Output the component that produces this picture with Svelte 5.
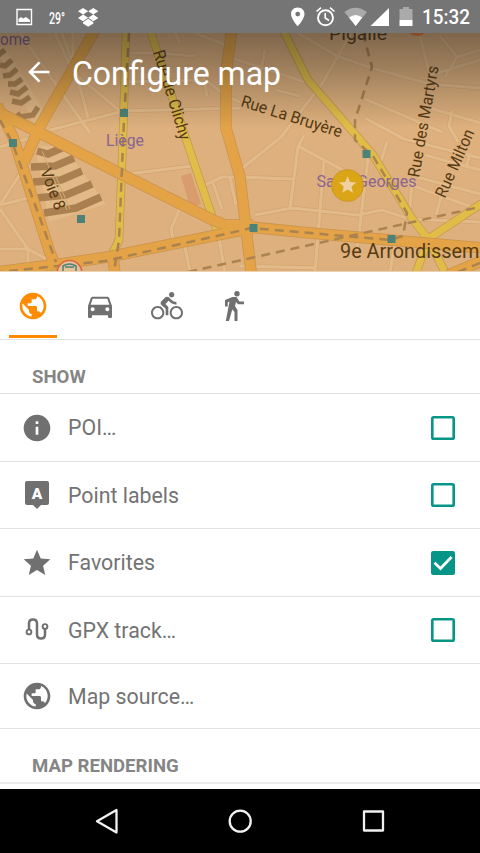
<script>
  const globe = 'M12 2C6.48 2 2 6.48 2 12s4.48 10 10 10 10-4.48 10-10S17.52 2 12 2zm-1 17.93c-3.95-.49-7-3.85-7-7.93 0-.62.08-1.21.21-1.79L9 15v1c0 1.1.9 2 2 2v1.93zm6.9-2.54c-.26-.81-1-1.39-1.9-1.39h-1v-3c0-.55-.45-1-1-1H8v-2h2c.55 0 1-.45 1-1V7h2c1.1 0 2-.9 2-2v-.41c2.93 1.19 5 4.06 5 7.41 0 2.08-.8 3.97-2.1 5.39z';
  const car = 'M18.92 6.01C18.72 5.42 18.16 5 17.5 5h-11c-.66 0-1.21.42-1.42 1.01L3 12v8c0 .55.45 1 1 1h1c.55 0 1-.45 1-1v-1h12v1c0 .55.45 1 1 1h1c.55 0 1-.45 1-1v-8l-2.08-5.99zM6.5 16c-.83 0-1.5-.67-1.5-1.5S5.67 13 6.5 13s1.5.67 1.5 1.5S7.33 16 6.5 16zm11 0c-.83 0-1.5-.67-1.5-1.5s.67-1.5 1.5-1.5 1.5.67 1.5 1.5-.67 1.5-1.5 1.5zM5 11l1.5-4.5h11L19 11H5z';
  const info = 'M12 2C6.48 2 2 6.48 2 12s4.48 10 10 10 10-4.48 10-10S17.52 2 12 2zm1 15h-2v-6h2v6zm0-8h-2V7h2v2z';
  const star = 'M12 17.27L18.18 21l-1.64-7.03L22 9.24l-7.19-.61L12 2 9.19 8.63 2 9.24l5.46 4.73L5.82 21z';
  const rows = [
    { label: 'POI…', icon: 'info', h: 68, box: true, on: false },
    { label: 'Point labels', icon: 'label', h: 67, box: true, on: false },
    { label: 'Favorites', icon: 'star', h: 68, box: true, on: true },
    { label: 'GPX track…', icon: 'track', h: 67, box: true, on: false },
    { label: 'Map source…', icon: 'globe', h: 65, box: false, on: false }
  ];
  const minor = [
    'M20 33L90 133', 'M55 33L73 72L120 111L240 108', 'M73 33V72', 'M62 33L77 75L88 118', 'M50 130L120 112', 'M125 53H158L195 56', 'M128 82L206 80L226 96L240 102', 'M203 75L207 96', 'M180 43L175 33', 'M195 33L228 46', 'M0 147L30 138', 'M0 205L26 165', 'M0 205L28 198', 'M0 209L28 249L52 262', 'M0 249H28V272', 'M128 174L192 166', 'M180 208L171 229L173 239', 'M205 185L222 177L240 177', 'M213 183L222 209', 'M230 178L236 205', 'M185 247L190 272', 'M219 239L225 272',
    'M232 58L308 83', 'M298 33L337 56L372 68L430 84L480 88', 'M350 35L322 84L281 137L240 170', 'M265 50L260 75', 'M276 90L300 96', 'M240 177L293 179', 'M304 135L298 147L290 208', 'M298 146L365 182', 'M324 161L315 272', 'M368 158L357 250', 'M365 118L404 139L480 158', 'M365 99L442 132', 'M387 142L380 164', 'M420 37L430 75L480 60', 'M440 36L457 57L480 50', 'M457 57L445 77', 'M430 108L480 123', 'M452 111L449 126L458 142', 'M408 184L480 210', 'M412 180L409 218', 'M425 155L480 170', 'M417 177L480 194', 'M443 190L436 215', 'M470 153L466 168', 'M255 215L292 208L320 211L358 215L382 210L410 219L480 222', 'M240 266L316 268', 'M395 243L390 272'
  ];
  const orange = ['M95 30L40 126L24 162', 'M-3 105L13 137L30 190L49 250L56 268', 'M0 113L38 132L123 175L213 220L225 225L253 225', 'M-4 272L60 264L108 257L252 228', 'M232 30L226 72V128L240 177L252 280', 'M250 227L310 233L390 240L484 248', 'M113 256L115 274', 'M448 275L484 260'];
  const yellow = ['M126 30L123 135L119 240L112 254', 'M150 30L186 139L217 231', 'M283 30L308 80L355 134L373 155L411 217L428 239L447 276', 'M484 202L428 239L415 276'];
  const dashes = ['M129 33L124 120L119 240L114 272', 'M363 33L372 67L355 120L355 140L373 156L407 213L403 236L390 240L252 228L105 261L0 272', 'M0 120L12 142L56 262', 'M188 272L480 207', 'M458 272L480 263'];
  const stations = [[124, 113], [13, 143], [81, 219], [253.5, 228], [366.5, 154], [391.5, 239]];
</script>

<div class="screen">
  <header>
    <svg class="map" viewBox="0 0 480 272" width="480" height="272" fill="none">
      <defs><linearGradient id="shade" x2="0" y2="1"><stop offset="0.1" stop-color="#151515" stop-opacity=".5"/><stop offset=".24" stop-color="#151515" stop-opacity=".33"/><stop offset=".47" stop-color="#151515" stop-opacity="0"/></linearGradient></defs>
      <rect width="480" height="272" fill="#deb07d"/>
      <path d="M181 176L191 173L201 204L190 207Z" fill="#d99c6d"/>
      <g stroke="#d2a571" stroke-width="4.4" stroke-linejoin="round">{#each minor as d}<path {d}/>{/each}</g>
      <g stroke="#e3ba89" stroke-width="3.2" stroke-linejoin="round">{#each minor as d}<path {d}/>{/each}</g>
      <g>
        <path d="M-4 50L14 82L34 125L48 122L40 104L12 58L-4 38Z" fill="#e0b885"/>
        <g stroke="#aa8050" stroke-width="5.5"><path d="M-3 56L5 50"/><path d="M0 65L5 66L12 60"/><path d="M3 76L10 75L17 69"/><path d="M8 84L15 84L22 79"/><path d="M10 92L18 94L27 87"/><path d="M12 101L21 103L30 97"/><path d="M17 113L20 117L33 115L38 107"/></g>
        <path d="M35 147L63 145L106 204L49 222Z" fill="#e2ba87"/>
        <g stroke="#aa8050" stroke-width="7.5"><path d="M37 151L48 154L62 148"/><path d="M31 167L55 166L74 158"/><path d="M33 182L61 180L82 171"/><path d="M37 198L66 195L92 184"/><path d="M44 213L76 208L101 197"/></g>
        <path d="M42 151L67 210M56 177L70 209" stroke="#d5aa73" stroke-width="1"/>
      </g>
      <g stroke="#c39756" stroke-width="8.5" stroke-linejoin="round">{#each yellow as d}<path {d}/>{/each}</g>
      <g stroke="#e1bd48" stroke-width="7" stroke-linejoin="round">{#each yellow as d}<path {d}/>{/each}</g>
      <g stroke="#ca934d" stroke-width="11.5" stroke-linejoin="round">{#each orange as d}<path {d}/>{/each}</g>
      <g stroke="#e3a346" stroke-width="10" stroke-linejoin="round">{#each orange as d}<path {d}/>{/each}</g>
      <g stroke="#aa8350" stroke-width="2.5" stroke-dasharray="9 6">{#each dashes as d}<path {d}/>{/each}</g>
      {#each stations as [x, y]}<rect x={x - 4} y={y - 4} width="8" height="8" fill="#4d8278"/>{/each}
      <circle cx="417" cy="24" r="12" fill="#eb7e37"/>
      <circle cx="69.5" cy="273" r="12.5" fill="#e6c29a" stroke="#dc663f" stroke-width="1.5"/>
      <path d="M63 272V266Q69.5 262 76 266V272M65 267H74" stroke="#4e8177" stroke-width="1.5"/>
      <g font-size="16.5" fill="#563b13">
        <text x="0" y="45" font-size="16" fill="#805b87" textLength="30" lengthAdjust="spacingAndGlyphs">ome</text>
        <text x="106" y="146" font-size="16.5" fill="#896591" textLength="38" lengthAdjust="spacingAndGlyphs">Liège</text>
        <text x="329" y="40" font-size="19" textLength="58" lengthAdjust="spacingAndGlyphs">Pigalle</text>
        <text x="316.5" y="187" fill="#896591" textLength="100" lengthAdjust="spacingAndGlyphs">Saint-Georges</text>
        <text transform="translate(153 52) rotate(73)" textLength="93" lengthAdjust="spacingAndGlyphs">Rue de Clichy</text>
        <text transform="translate(240 106) rotate(17.5)" textLength="105" lengthAdjust="spacingAndGlyphs">Rue La Bruyère</text>
        <text transform="translate(419 178) rotate(-80)" textLength="113" lengthAdjust="spacingAndGlyphs">Rue des Martyrs</text>
        <text transform="translate(445 199) rotate(-66)" textLength="73" lengthAdjust="spacingAndGlyphs">Rue Milton</text>
        <text transform="translate(40 171) rotate(69)" textLength="43" lengthAdjust="spacingAndGlyphs">Voie 8</text>
        <text x="340" y="258" font-size="19.5" textLength="139.5" lengthAdjust="spacingAndGlyphs">9e Arrondissem</text>
      </g>
      <circle cx="347.5" cy="185.5" r="16" fill="#daa516" stroke="#c28e23" stroke-width=".6"/>
      <path transform="translate(337.3 174.6) scale(.86)" d={star} fill="#efd0a1"/>
      <rect width="480" height="272" fill="url(#shade)"/>
      <path d="M0 271.5H480" stroke="#ecd2ae"/>
    </svg>
    <div class="status">
      <svg width="480" height="33" viewBox="0 0 480 33" fill="#fff">
        <path d="M17 9.5H31.5V24.5H17Z" fill="none" stroke="#fff" stroke-width="1.4"/><path d="M18.5 22V19L21 17L23 18.5L26 17L30 20V22Z"/>
        <path d="M83 8L88.2 11.3L83.1 14.5L78 11.3ZM93.4 8L98.3 11.3L93.3 14.5L88.2 11.3ZM83.1 14.5L88.2 17.8L83 21.2L78 17.9ZM93.3 14.5L98.3 17.9L93.4 21.2L88.2 17.8ZM83 22.2L88.2 18.8L93.4 22.2V23.5L88.2 26.7L83 23.5Z"/>
        <path fill-rule="evenodd" d="M297.7 7.5C293.7 7.5 291 10.4 291 14C291 19 297.7 26.2 297.7 26.2S304.5 19 304.5 14C304.5 10.4 301.7 7.5 297.7 7.5ZM297.7 11.7A2.4 2.4 0 1 1 297.7 16.5A2.4 2.4 0 1 1 297.7 11.7Z"/>
        <g fill="none" stroke="#fff" stroke-width="1.9"><circle cx="325.5" cy="17.8" r="7.5"/><path d="M325.2 13V18L329 20.5M316.5 11.5L321 7.7M330 7.7L334.5 11.5" stroke-width="1.6"/></g>
        <path d="M344.3 12Q355.5 3.5 367 12L355.7 26Z" fill="#aaa"/><path d="M349 17.5Q355.6 12.5 362.2 17.5L355.7 26Z"/>
        <path d="M389 8V26H370.5Z"/><path d="M403 7H409V9H412.5V20H399.5V9H403Z" fill="#aaa"/><path d="M399.5 20H412.5V26H399.5Z"/>
      </svg>
      <span class="temp">29°</span><span class="clock">15:32</span>
    </div>
    <div class="title">
      <svg width="24" height="24" viewBox="0 0 24 24"><path d="M22.5 12H3M12.5 2.3L3 12L12.5 21.7" fill="none" stroke="#fff" stroke-width="2.6"/></svg>
      <h1>Configure map</h1>
    </div>
  </header>

  <nav class="tabs">
    <button class="active" aria-label="Browse"><svg viewBox="0 0 24 24" width="32" height="32"><path d={globe}/></svg></button>
    <button aria-label="Car"><svg viewBox="0 0 24 24" width="32" height="32"><path d={car}/></svg></button>
    <button aria-label="Bicycle"><svg viewBox="0 0 24 24" width="32" height="32"><path d="M15.5 5.5c1.1 0 2-.9 2-2s-.9-2-2-2-2 .9-2 2 .9 2 2 2zM5 12c-2.8 0-5 2.200-5 5s2.200 5 5 5 5-2.200 5-5-2.200-5-5-5zm0 8.500c-1.900 0-3.500-1.600-3.500-3.500s1.600-3.500 3.500-3.500 3.500 1.600 3.500 3.500-1.600 3.500-3.500 3.500zm5.800-10l2.400-2.400.8.8c1.300 1.300 3 2.100 5.100 2.100V9c-1.500 0-2.700-.6-3.600-1.500l-1.900-1.900c-.5-.4-1-.6-1.600-.6s-1.100.2-1.400.6L7.800 8.400c-.4.4-.6.9-.6 1.400 0 .6.2 1.100.6 1.400L11 14v5h2v-6.200l-2.200-2.300zM19 12c-2.800 0-5 2.200-5 5s2.200 5 5 5 5-2.200 5-5-2.200-5-5-5zm0 8.500c-1.900 0-3.500-1.600-3.500-3.500s1.600-3.500 3.500-3.500 3.500 1.600 3.500 3.500-1.600 3.500-3.500 3.500z"/></svg></button>
    <button aria-label="Walk"><svg viewBox="0 0 22 32" width="22" height="32"><circle cx="14" cy="3.8" r="2.7"/><path d="M9.500 7H13.500L16.500 11.500H21V14.200H15L13 12L12 16L14.500 20V31H11.500V22L9.300 19.500L6 31H2.800L6.500 11.500L4.700 12.500V16.500H2V10Z"/></svg></button>
  </nav>

  <h2 class="show">SHOW</h2>
  <ul>
    {#each rows as row}
      <li style="height:{row.h}px">
        <span class="icon">
          {#if row.icon === 'label'}
            <svg width="32" height="32" viewBox="0 0 32 32"><path d="M6 2H26Q28 2 28 4V24Q28 26 26 26H20L16 30L12 26H6Q4 26 4 24V4Q4 2 6 2Z"/><text x="16" y="19.5" text-anchor="middle" font-size="15.5" font-weight="900" fill="#fff">A</text></svg>
          {:else if row.icon === 'track'}
            <svg width="32" height="32" viewBox="0 0 32 32" fill="none"><path d="M8 16V9.5Q8 5.5 12 5.5Q16 5.5 16 9.5V20.5Q16 24.5 20 24.5Q24 24.5 24 20.5V14.5" stroke="#707070" stroke-width="2.5"/><circle cx="8" cy="18" r="2.400" fill="#fff" stroke="#707070" stroke-width="1.900"/><circle cx="24" cy="12.500" r="2.400" fill="#fff" stroke="#707070" stroke-width="1.900"/></svg>
          {:else}
            <svg width="32" height="32" viewBox="0 0 24 24"><path d={row.icon === 'info' ? info : row.icon === 'star' ? star : globe}/></svg>
          {/if}
        </span>
        <span class="label">{row.label}</span>
        {#if row.box}
          <svg class="box" width="24" height="24" viewBox="0 0 24 24" fill="none">
            {#if row.on}
              <rect width="24" height="24" rx="2.2" fill="#069587"/><path d="M3.500 11.700L9.500 17.500L20.500 6" stroke="#fff" stroke-width="2.700"/>
            {:else}
              <rect x="1.300" y="1.300" width="21.400" height="21.400" rx="1.300" stroke="#069587" stroke-width="2.600"/>
            {/if}
          </svg>
        {/if}
      </li>
    {/each}
  </ul>
  <h2 class="rendering">MAP RENDERING</h2>
  <div class="rest"></div>

  <footer>
    <svg width="480" height="64" viewBox="0 0 480 64" fill="none" stroke="#f1f1f1" stroke-width="2.3" stroke-linejoin="round"><path d="M97 32.300L116.500 21V43.500Z"/><circle cx="240.200" cy="32.200" r="10.500"/><rect x="364" y="22.500" width="19" height="19"/></svg>
  </footer>
</div>

<style>
  :global(body) { margin: 0; }
  * { box-sizing: border-box; }
  .screen { width: 480px; height: 853px; display: flex; flex-direction: column; overflow: hidden; background: #fff; font-family: Roboto, sans-serif; color: #737373; }
  header { position: relative; height: 272px; flex: none; overflow: hidden; }
  svg { display: block; }
  .map { position: absolute; inset: 0; }
  .status { position: relative; height: 33px; background: #757575; color: #fff; }
  .temp, .clock { position: absolute; white-space: nowrap; }
  .temp { left: 49px; top: 9px; font-size: 17px; line-height: 18px; font-weight: 500; transform: scaleX(.62); transform-origin: left; }
  .clock { left: 422px; top: 6px; font-size: 19.5px; line-height: 23px; font-weight: 500; transform: scaleX(.97); transform-origin: left; }
  .title { position: relative; display: flex; align-items: center; gap: 20px; padding: 0 0 0 27px; height: 78px; color: #fff; }
  h1 { margin: 4px 0 0 1px; font-size: 33px; line-height: 40px; font-weight: 400; white-space: nowrap; transform: scaleX(.97); transform-origin: left; }
  .tabs { display: flex; flex: none; height: 68px; padding-left: 9.4px; gap: 19px; border-bottom: 1px solid #e2e2e2; }
  .tabs button { width: 48px; height: 66px; padding: 4px 0 0; border: 0; border-bottom: 3px solid transparent; background: none; display: flex; align-items: center; justify-content: center; fill: #707070; }
  .tabs .active { fill: #ff8c00; border-color: #ff8c00; }
  h2 { margin: 0; flex: none; padding-left: 32px; font-size: 18.6px; font-weight: 700; color: #858585; border-bottom: 1px solid #e2e2e2; white-space: nowrap; }
  .show { height: 54px; line-height: 74px; }
  .rendering { height: 55px; line-height: 75px; border-bottom: 2px solid #ebebeb; }
  ul { list-style: none; margin: 0; padding: 0; flex: none; }
  li { display: flex; align-items: center; padding: 0 25px 0 21.4px; border-bottom: 1px solid #e2e2e2; }
  .icon { width: 46.6px; fill: #707070; }
  .label { flex: 1; font-size: 22px; white-space: nowrap; transform: scaleX(.97); transform-origin: left; }
  .rest { flex: 1; }
  footer { height: 64px; flex: none; background: #000; }
</style>
